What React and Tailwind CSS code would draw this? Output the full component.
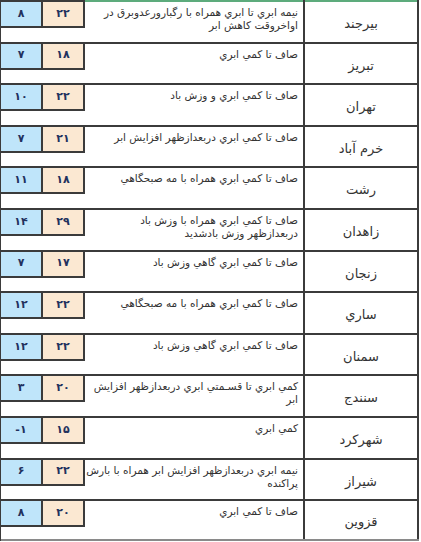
const rows = [
  { city: 'بیرجند', max: '۲۲', min: '۸', desc: ['نیمه ابري تا ابري همراه با رگبارورعدوبرق در', 'اواخروقت کاهش ابر'] },
  { city: 'تبریز', max: '۱۸', min: '۷', desc: ['صاف تا کمي ابري'] },
  { city: 'تهران', max: '۲۲', min: '۱۰', desc: ['صاف تا کمي ابري و وزش باد'] },
  { city: 'خرم آباد', max: '۲۱', min: '۷', desc: ['صاف تا کمي ابري دربعدازظهر افزایش ابر'] },
  { city: 'رشت', max: '۱۸', min: '۱۱', desc: ['صاف تا کمي ابري همراه با مه صبحگاهي'] },
  { city: 'زاهدان', max: '۲۹', min: '۱۴', desc: ['صاف تا کمي ابري همراه با وزش باد', 'دربعدازظهر وزش بادشدید'] },
  { city: 'زنجان', max: '۱۷', min: '۷', desc: ['صاف تا کمي ابري گاهي وزش باد'] },
  { city: 'ساري', max: '۲۲', min: '۱۲', desc: ['صاف تا کمي ابري همراه با مه صبحگاهي'] },
  { city: 'سمنان', max: '۲۲', min: '۱۲', desc: ['صاف تا کمي ابري گاهي وزش باد'] },
  { city: 'سنندج', max: '۲۰', min: '۳', desc: ['کمي ابري تا قسـمتي ابري دربعدازظهر افزایش', 'ابر'] },
  { city: 'شهرکرد', max: '۱۵', min: '-۱', desc: ['کمي ابري'] },
  { city: 'شیراز', max: '۲۲', min: '۶', desc: ['نیمه ابري دربعدازظهر افزایش ابر همراه با بارش', 'پراکنده'] },
  { city: 'قزوین', max: '۲۰', min: '۸', desc: ['صاف تا کمي ابري'] },
];

function Row({ row, first, last }) {
  const top = first ? 'border-[#5dab7c]' : 'border-[#3b3b3b]';
  return (
    <div className={'flex h-[41.6px] ' + (last ? 'border-b-2 border-[#8a8a8a]' : '')}>
      {/* temps */}
      <div className="w-[84px] flex-none border-t-2 border-[#3b3b3b]">
        <div className="flex h-[26px]">
          <div className="w-[42px] flex items-center justify-center bg-[#bfe5fa] border-r-2 border-b-2 border-[#3b3b3b] text-[11px] font-bold text-[#22315e]">
            {row.min}
          </div>
          <div className="w-[42px] flex items-center justify-center bg-[#fbe8d2] border-r-2 border-b-2 border-[#3b3b3b] text-[11px] font-bold text-[#22315e]">
            {row.max}
          </div>
        </div>
      </div>
      {/* description */}
      <div dir="rtl" className={'flex-1 border-t-2 ' + top + ' pr-[5px] pt-[4px] text-[10.5px] leading-[13px] text-[#333]'}>
        {row.desc.map((line, i) => (
          <div key={i} className="whitespace-nowrap">{line}</div>
        ))}
      </div>
      {/* city */}
      <div dir="rtl" className={'w-[116px] flex-none border-t-2 ' + top + ' relative flex items-center justify-center pt-[4px] text-[13px] text-[#333]'}>
        <div className="absolute left-0 top-[-2px] bottom-0 w-[2px] bg-[#3b3b3b]" />
        <div className="absolute right-0 top-[-2px] bottom-0 w-[2px] bg-[#3b3b3b]" />
        {row.city}
      </div>
    </div>
  );
}

export default function App() {
  return (
    <div className="w-[421px] h-[542px] bg-white overflow-hidden" style={{ fontFamily: 'Tahoma, "DejaVu Sans", sans-serif' }}>
      <div className="w-[419px] border-l border-[#3b3b3b]">
        {rows.map((row, i) => (
          <Row key={row.city} row={row} first={i === 0} last={i === rows.length - 1} />
        ))}
      </div>
    </div>
  );
}
